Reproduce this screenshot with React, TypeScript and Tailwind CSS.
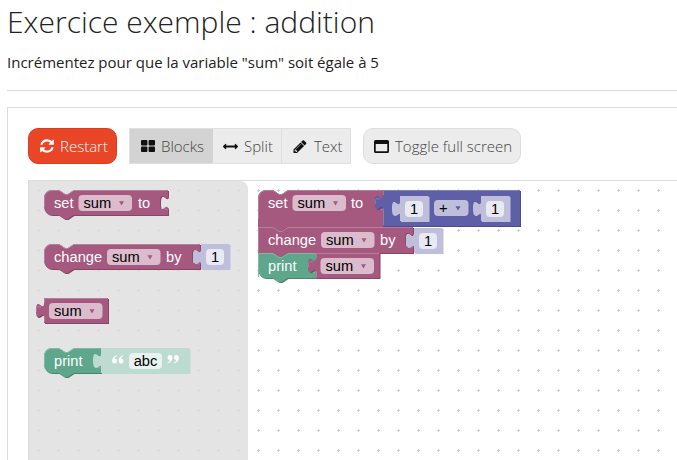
import type { ReactNode } from "react";

const PLUM = "#a5597f";
const GREEN = "#5ea68c";
const INDIGO = "#5f5fa7";
const PALE = "#bfbfdc";
const MINT = "#bddbd1";

const darker: Record<string, string> = {
  [PLUM]: "#844766",
  [GREEN]: "#498470",
  [INDIGO]: "#4c4c86",
  [PALE]: "#bfbfdc",
  [MINT]: "#bddbd1",
};
const lighter: Record<string, string> = {
  [PLUM]: "#b87d9a",
  [GREEN]: "#7fb9a6",
  [INDIGO]: "#8080b8",
  [PALE]: "#bfbfdc",
  [MINT]: "#bddbd1",
};

const SOCKET = "v 5 c 0,10 -8,-8 -8,7.5 s 8,-2.5 8,7.5";

type BlockProps = {
  x: number;
  y: number;
  w: number;
  h?: number;
  color: string;
  socket?: boolean;
  joinTop?: boolean;
  joinBottom?: boolean;
};

function Statement({ x, y, w, h = 25, color, socket = true, joinTop, joinBottom }: BlockProps) {
  const start = joinTop ? "m 0,0" : "m 0,8 A 8,8 0 0,1 8,0";
  const top = `${start} H 15 l 6,4 3,0 6,-4 H ${w}`;
  const end = joinBottom ? "H 0 z" : "H 8 a 8,8 0 0,1 -8,-8 z";
  const d = `${top} ${socket ? SOCKET : ""} V ${h} H 29.5 l -6,4 -3,0 -6,-4 ${end}`;
  const light = joinTop
    ? `m 0.5,${h - 1} V 0.5 H 15 l 6,4 3,0 6,-4 H ${w - 0.5}`
    : `m 0.5,${h - 8} V 8 A 7.5,7.5 0 0,1 8,0.5 H 15 l 6,4 3,0 6,-4 H ${w - 0.5}`;
  return (
    <g transform={`translate(${x} ${y})`}>
      <path d={d} fill={darker[color]} transform="translate(1 1)" />
      <path d={d} fill={color} />
      <path d={light} fill="none" stroke={lighter[color]} strokeWidth="1" />
      {socket && <path d={`M ${w - 4.5},18 l 4,2.2`} stroke={lighter[color]} fill="none" />}
    </g>
  );
}

function Value({ x, y, w, h = 25, color, children }: BlockProps & { children?: ReactNode }) {
  const d = `m 0,0 H ${w} V ${h} H 0 V 20 c 0,-10 -8,8 -8,-7.5 s 8,2.5 8,-7.5 z`;
  return (
    <g transform={`translate(${x} ${y})`}>
      <path d={d} fill={darker[color]} transform="translate(1 1)" />
      <path d={d} fill={color} />
      <path
        d={`M 0.5,${h - 1} V 18.5 M -7.5,14 C -8,7 -6,9 -3,9 M 0.5,5 V 0.5 H ${w - 0.5}`}
        fill="none"
        stroke={lighter[color]}
      />
      {children}
    </g>
  );
}

function Label({ x, y, children }: { x: number; y: number; children: string }) {
  return (
    <text x={x} y={y} fill="#fff">
      {children}
    </text>
  );
}

function Dropdown({ x, y, w = 53.5, text = "sum", color = PLUM }: { x: number; y: number; w?: number; text?: string; color?: string }) {
  return (
    <g transform={`translate(${x} ${y})`}>
      <rect width={w} height="16" rx="4" fill="#fff" fillOpacity="0.6" />
      <text x="5" y="12.5" fill="#000">
        {text}
      </text>
      <path d={`M ${w - 13},6.3 h 5 l -2.5,4.2 z`} fill={color} />
    </g>
  );
}

function Input({ x, y, w, text }: { x: number; y: number; w: number; text: string }) {
  return (
    <g transform={`translate(${x} ${y})`}>
      <rect width={w} height="16" rx="4" fill="#fff" fillOpacity="0.65" />
      <text x={w / 2} y="12.5" textAnchor="middle" fill="#000">
        {text}
      </text>
    </g>
  );
}

function Num({ x, y }: { x: number; y: number }) {
  return (
    <>
      <Value x={x} y={y} w={28.5} color={PALE} />
      <Input x={x + 5} y={y + 5} w={18} text="1" />
    </>
  );
}

function Quote({ x, y, close }: { x: number; y: number; close?: boolean }) {
  const d = "M 5,0 C 2,1 0,3 0,6 a 2.5,2.5 0 1,0 2.6,-2.5 C 3,2 4,1.3 5,0.8 Z";
  return (
    <g transform={`translate(${x} ${y})${close ? " rotate(180)" : ""}`} fill="#fff">
      <path d={d} />
      <path d={d} transform="translate(6.5 0)" />
    </g>
  );
}

function Workspace() {
  return (
    <svg
      className="block h-[279px] w-full font-['Liberation_Sans',Arial,sans-serif] text-[14.67px]"
      viewBox="29 181 648 279"
      preserveAspectRatio="xMinYMin slice"
    >
      <defs>
        <pattern id="dots" x="248" y="180" width="20" height="20" patternUnits="userSpaceOnUse">
          <path d="M 9,10.5 h 3 M 10.5,9 v 3" stroke="#ccc" />
        </pattern>
      </defs>
      <rect x="29" y="181" width="648" height="279" fill="url(#dots)" />

      <Statement x={258} y={190} w={125} h={37} color={PLUM} joinBottom />
      <Label x={268} y={208}>set</Label>
      <Dropdown x={292.5} y={195} />
      <Label x={351} y={208}>to</Label>
      <Value x={383} y={190} w={137} h={36} color={INDIGO} />
      <Num x={400} y={196} />
      <Dropdown x={434} y={200} w={34.5} text="+" color={INDIGO} />
      <Num x={481} y={196} />

      <Statement x={258} y={227} w={155} h={26} color={PLUM} joinTop joinBottom />
      <Label x={268} y={245}>change</Label>
      <Dropdown x={321} y={232} />
      <Label x={380} y={245}>by</Label>
      <Num x={414} y={228} />

      <Statement x={258} y={253} w={58} h={25} color={GREEN} joinTop />
      <Label x={268} y={271}>print</Label>
      <Value x={316} y={253} w={63.5} color={PLUM} />
      <Dropdown x={320.5} y={258} />

      <path d="M 29,181 H 240 a 8,8 0 0,1 8,8 V 460 H 29 Z" fill="#ddd" fillOpacity="0.8" />

      <Statement x={44} y={190} w={124} color={PLUM} />
      <Label x={54} y={208}>set</Label>
      <Dropdown x={78.5} y={195} />
      <Label x={138} y={208}>to</Label>

      <Statement x={44} y={244} w={156} color={PLUM} />
      <Label x={54} y={262}>change</Label>
      <Dropdown x={107} y={249} />
      <Label x={166} y={262}>by</Label>
      <Num x={201} y={244} />

      <Value x={44} y={298} w={64} color={PLUM} />
      <Dropdown x={49} y={303} />

      <Statement x={44} y={348} w={57} color={GREEN} />
      <Label x={54} y={366}>print</Label>
      <Value x={101} y={348} w={88.5} color={MINT} />
      <Quote x={112} y={355} />
      <Input x={129} y={353} w={33} text="abc" />
      <Quote x={179} y={363.5} close />
    </svg>
  );
}

function RefreshIcon() {
  return (
    <svg className="h-4 w-[14px]" viewBox="0 0 1536 1792" fill="currentColor">
      <path d="M1511 1056q0 5-1 7-64 268-268 434.5t-478 166.5q-146 0-282.5-55t-243.5-157l-129 129q-19 19-45 19t-45-19-19-45v-448q0-26 19-45t45-19h448q26 0 45 19t19 45-19 45l-137 137q71 66 161 102t187 36q134 0 250-65t186-179q11-17 53-117 8-23 30-23h192q13 0 22.5 9.5t9.5 22.5zm25-800v448q0 26-19 45t-45 19h-448q-26 0-45-19t-19-45 19-45l138-138q-148-137-349-137-134 0-250 65t-186 179q-11 17-53 117-8 23-30 23h-199q-13 0-22.5-9.5t-9.5-22.5v-7q65-268 270-434.5t480-166.5q146 0 284 55.5t245 156.5l130-129q19-19 45-19t45 19 19 45z" />
    </svg>
  );
}

function BlocksIcon() {
  return (
    <svg className="h-3 w-[14px]" viewBox="0 0 14 12" fill="#111">
      <rect width="6.4" height="5.5" rx="1" />
      <rect x="7.6" width="6.4" height="5.5" rx="1" />
      <rect y="6.5" width="6.4" height="5.5" rx="1" />
      <rect x="7.6" y="6.5" width="6.4" height="5.5" rx="1" />
    </svg>
  );
}

function SplitIcon() {
  return (
    <svg className="size-[15px]" viewBox="0 0 1792 1792" fill="#111">
      <path d="M1792 896q0 26-19 45l-256 256q-19 19-45 19t-45-19-19-45v-128h-1024v128q0 26-19 45t-45 19-45-19l-256-256q-19-19-19-45t19-45l256-256q19-19 45-19t45 19 19 45v128h1024v-128q0-26 19-45t45-19 45 19l256 256q19 19 19 45z" />
    </svg>
  );
}

function PencilIcon() {
  return (
    <svg className="h-[13px] w-[14px]" viewBox="128 128 1536 1536" fill="#111">
      <path d="M491 1536l91-91-235-235-91 91v107h128v128h107zm523-928q0-22-22-22-10 0-17 7l-542 542q-7 7-7 17 0 22 22 22 10 0 17-7l542-542q7-7 7-17zm-54-192l416 416-832 832h-416v-416zm683 96q0 53-37 90l-166 166-416-416 166-165q36-38 90-38 53 0 91 38l235 234q37 39 37 91z" />
    </svg>
  );
}

function WindowIcon() {
  return (
    <svg className="h-[13px] w-[15px]" viewBox="0 0 15 13" fill="#111" fillRule="evenodd">
      <path d="M1.5,0 h12 a1.5,1.5 0 0 1 1.5,1.5 v10 a1.5,1.5 0 0 1 -1.5,1.5 h-12 a1.5,1.5 0 0 1 -1.5,-1.5 v-10 a1.5,1.5 0 0 1 1.5,-1.5 z M1.7,4 v7.3 h11.6 v-7.3 z" />
    </svg>
  );
}

export default function App() {
  return (
    <div className="h-[460px] w-full overflow-hidden bg-white pl-[7px] font-['Open_Sans',sans-serif] text-[#222]">
      <h1 className="h-[46px] whitespace-nowrap text-[30px] leading-[44px] font-light">Exercice exemple : addition</h1>
      <p className="h-11 text-[15px] leading-8">Incrémentez pour que la variable "sum" soit égale à 5</p>
      <hr className="border-[#ddd]" />
      <section className="mt-4 h-[353px] border-t border-l border-[#ddd] pt-5 pl-5">
        <div className="flex h-9 gap-3 whitespace-nowrap text-[15px] font-light text-[#444]">
          <button className="flex w-[89px] items-center gap-1.5 rounded-[10px] border border-[#dd3d20] bg-[#e94628] pl-[11px] text-white">
            <RefreshIcon />
            Restart
          </button>
          <div className="flex w-[222px] border border-[#e0e0e0] bg-[#ececec]">
            <button className="flex w-[83px] items-center gap-1.5 bg-[#d3d3d3] pl-[11px]">
              <BlocksIcon />
              Blocks
            </button>
            <button className="flex w-[69px] items-center gap-1.5 border-r border-[#ddd] pl-[10px]">
              <SplitIcon />
              Split
            </button>
            <button className="flex grow items-center gap-[7px] pl-[11px]">
              <PencilIcon />
              Text
            </button>
          </div>
          <button className="flex w-[158px] items-center gap-1.5 rounded-[10px] border border-[#ddd] bg-[#ececec] pl-[10px]">
            <WindowIcon />
            Toggle full screen
          </button>
        </div>
        <div className="mt-4 h-[280px] overflow-hidden border-t border-l border-[#ddd]">
          <Workspace />
        </div>
      </section>
    </div>
  );
}
